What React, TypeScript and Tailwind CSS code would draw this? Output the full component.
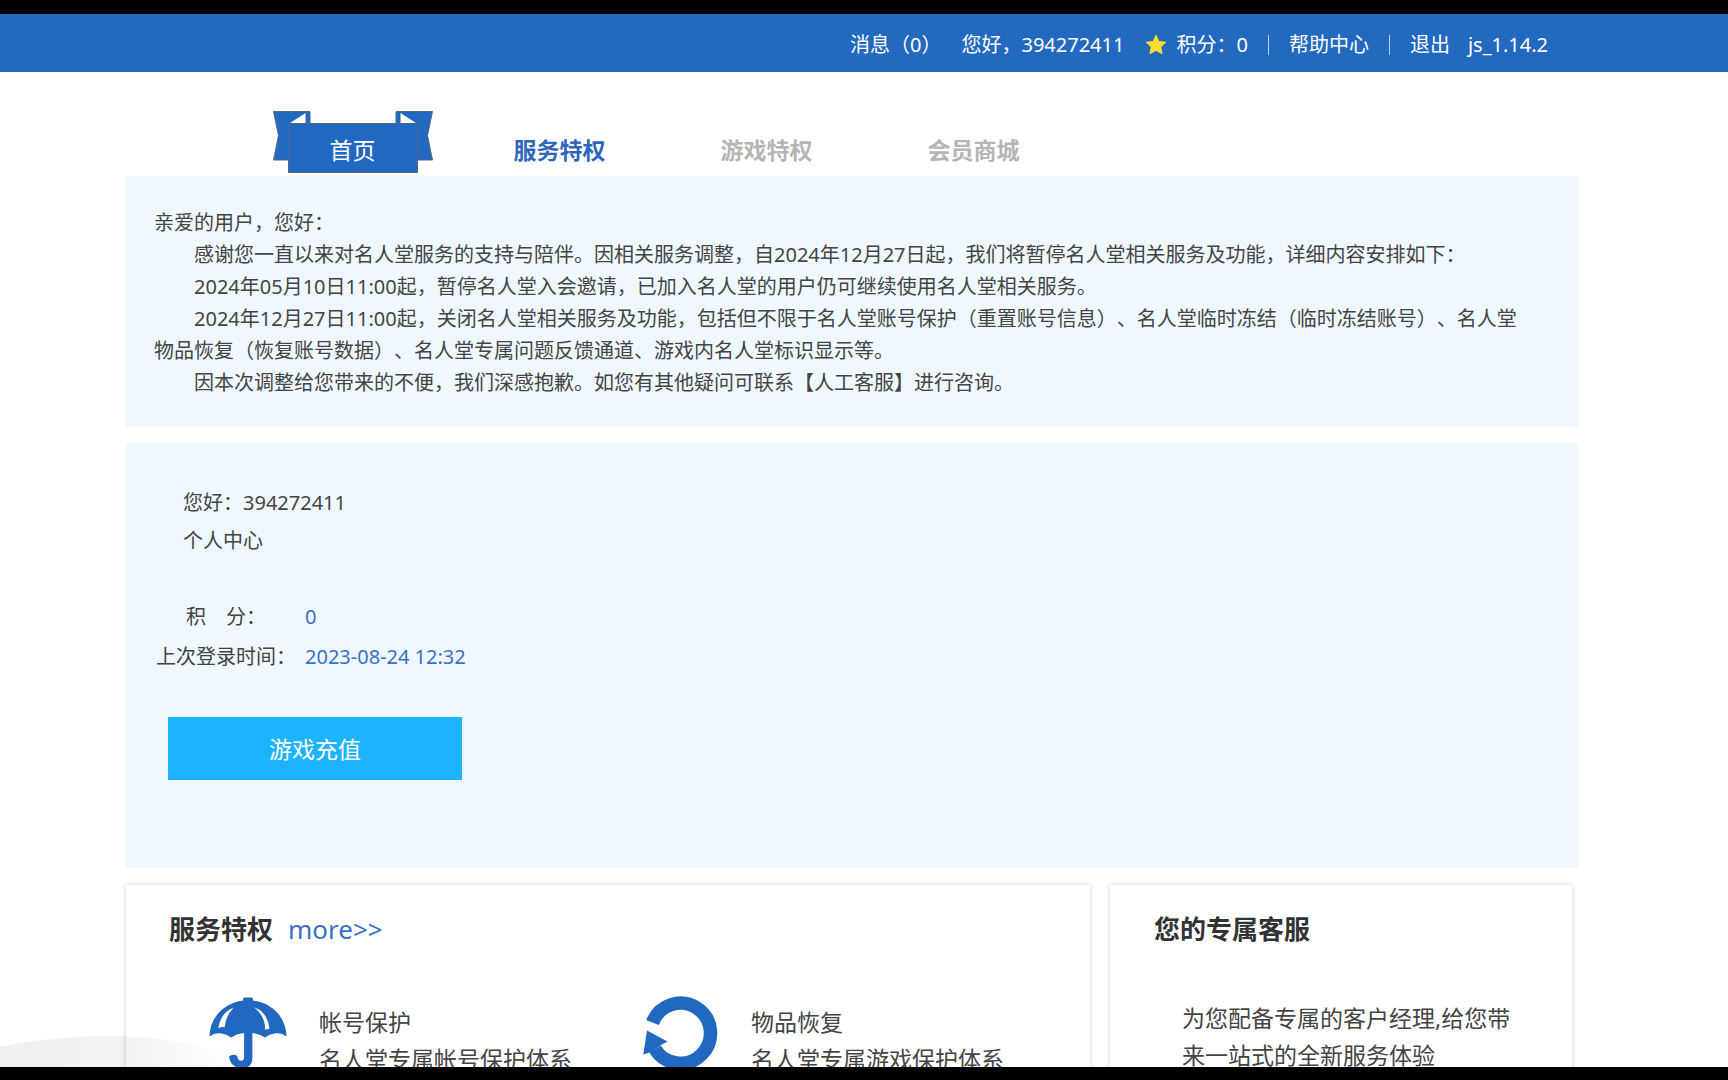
import React from 'react';

interface NavTab {
    label: string;
    className: string;
}

const otherTabs: NavTab[] = [
    { label: '服务特权', className: 'text-[#2f66bd]' },
    { label: '游戏特权', className: 'text-[#b5b5b5]' },
    { label: '会员商城', className: 'text-[#b5b5b5]' },
];

const StarIcon: React.FC = () => (
    <svg viewBox="0 0 24 24" className="w-6 h-6" fill="#fbdd2c">
        <path d="M12 2.200l2.900 6.300 6.900.8-5.100 4.700 1.400 6.800L12 17.400l-6.100 3.400 1.400-6.800-5.100-4.700 6.900-.8z" stroke="#fbdd2c" strokeLinejoin="round" />
    </svg>
);

const Ribbon: React.FC = () => (
    <svg viewBox="0 0 160 62" className="absolute left-1/2 top-0 -translate-x-1/2 w-[160px] h-[62px]">
        <g fill="#2268c0" stroke="#55677f" strokeWidth="1">
            <path d="M.5 .5H37V12L15.5 49H.5L5.5 24.5z" />
            <path d="M159.5 .5H123V12L144.5 49H159.5L154.5 24.5z" />
            <path d="M15.500 12.500H144.500V61.500H15.500z" />
        </g>
        <path d="M17 12L32.500 2V12z" fill="#fff" />
        <path d="M143 12L127.500 2V12z" fill="#fff" />
    </svg>
);

const UmbrellaIcon: React.FC = () => (
    <svg viewBox="0 0 80 78" className="w-[78px] h-[78px] shrink-0">
        <path
            d="M35 3.500V1.500Q35 .5 36.500 .5H43.500Q45 .5 45 1.500V3.500C64 6 79 20 79.500 40.500Q74 36 67 37.500Q61 38.500 57.500 41.500Q51 37.500 44.500 37V62Q44.500 73 33.500 73Q22 72.500 20.500 61Q25 58 29 60.500Q29.500 65.500 33 65.500Q36 65.500 36 61V37Q29 37.500 22.500 41.500Q19 38.500 13 37.500Q6 36 .5 40.500C1 20 16 6 35 3.500z"
            fill="#2268c0"
        />
        <path d="M25 11Q12 16 9.500 32Q13 30.500 16 31Q17 20 25 11z" fill="#fff" />
        <path d="M46 10.500Q60 15 62 32.500Q60 33 57.500 33.500Q58 20 46 10.500z" fill="#fff" />
    </svg>
);

const RestoreIcon: React.FC = () => (
    <svg viewBox="0 0 76 78" className="w-[76px] h-[78px] shrink-0">
        <path d="M9.500 26.500A30 30 0 1 1 12 53" fill="none" stroke="#2268c0" strokeWidth="13.5" />
        <path d="M4 34.500L24.500 45.500L18 49L8 56L.3 58.500z" fill="#2268c0" />
    </svg>
);

const Header: React.FC = () => (
    <header className="h-[58px] shrink-0 bg-[#2369bf] text-white flex items-center justify-end gap-5 pt-1 pr-[180px] whitespace-nowrap">
        <a href="#messages">消息（0）</a>
        <span>您好，394272411</span>
        <span className="flex items-center gap-2">
            <StarIcon />
            积分：0
        </span>
        <span className="w-px h-5 bg-[#b9d2f2]" />
        <a href="#help">帮助中心</a>
        <span className="w-px h-5 bg-[#b9d2f2]" />
        <span className="flex gap-[18px]">
            <a href="#logout">退出</a>
            <span>js_1.14.2</span>
        </span>
    </header>
);

const Privilege: React.FC<{ icon: React.ReactNode; title: string; text: string }> = ({ icon, title, text }) => (
    <div className="flex w-[434px] gap-8 whitespace-nowrap">
        {icon}
        <div className="pt-2 text-[23px] leading-[37px]">
            <h3>{title}</h3>
            <p>{text}</p>
        </div>
    </div>
);

const App: React.FC = () => {
    return (
        <div className="relative h-screen flex flex-col overflow-hidden bg-white text-[#444] text-[20px] leading-8 font-['Noto_Sans','Noto_Sans_CJK_SC',sans-serif] [text-spacing-trim:space-all]">
            <div className="h-[14px] shrink-0 bg-black" />
            <Header />

            <main className="flex-1 min-h-0 overflow-hidden pl-[126px] pr-[150px]">
                <nav className="flex h-[104px] pt-[39px] pl-[123px] text-[23px]">
                    <a href="#home" className="relative w-[207px] h-[62px] pt-4 flex items-center justify-center text-white">
                        <Ribbon />
                        <span className="relative">首页</span>
                    </a>
                    {otherTabs.map(tab => (
                        <a
                            key={tab.label}
                            href="#tab"
                            className={`w-[207px] h-[62px] pt-4 flex items-center justify-center font-bold ${tab.className}`}
                        >
                            {tab.label}
                        </a>
                    ))}
                </nav>

                <section className="bg-[#f0f8ff] h-[251px] pt-[31px] pl-7 pr-14">
                    <p>亲爱的用户，您好：</p>
                    <p className="indent-10">感谢您一直以来对名人堂服务的支持与陪伴。因相关服务调整，自2024年12月27日起，我们将暂停名人堂相关服务及功能，详细内容安排如下：</p>
                    <p className="indent-10">2024年05月10日11:00起，暂停名人堂入会邀请，已加入名人堂的用户仍可继续使用名人堂相关服务。</p>
                    <p className="indent-10">2024年12月27日11:00起，关闭名人堂相关服务及功能，包括但不限于名人堂账号保护（重置账号信息）、名人堂临时冻结（临时冻结账号）、名人堂物品恢复（恢复账号数据）、名人堂专属问题反馈通道、游戏内名人堂标识显示等。</p>
                    <p className="indent-10">因本次调整给您带来的不便，我们深感抱歉。如您有其他疑问可联系【人工客服】进行咨询。</p>
                </section>

                <section className="mt-4 bg-[#f0f8ff] h-[425px] pt-[41px]">
                    <div className="pl-[57px] leading-[38px]">
                        <p>您好：394272411</p>
                        <p>个人中心</p>
                    </div>
                    <dl className="mt-[37px] pl-[30px] grid grid-cols-[140px_1fr] gap-x-[9px] leading-10 whitespace-nowrap">
                        <dt className="text-center">积&emsp;分：</dt>
                        <dd className="text-[#3b70c4]">0</dd>
                        <dt className="text-center">上次登录时间：</dt>
                        <dd className="text-[#3b70c4]">2023-08-24 12:32</dd>
                    </dl>
                    <button type="button" className="mt-10 ml-[42px] w-[294px] h-[63px] bg-[#1eb3ff] text-white text-[23px]">
                        游戏充值
                    </button>
                </section>

                <div className="mt-[17px] mr-[6px] flex gap-5">
                    <section className="flex-1 h-[300px] bg-white shadow-[0_0_5px_rgba(0,0,0,0.2)] pt-[25px] pl-[43px]">
                        <h2 className="flex items-center gap-[15px] text-[26px] leading-[38px] font-bold text-[#333]">
                            服务特权
                            <a href="#more" className="font-normal text-[#3b70c4]">more&gt;&gt;</a>
                        </h2>
                        <div className="flex mt-12 pl-10">
                            <Privilege icon={<UmbrellaIcon />} title="帐号保护" text="名人堂专属帐号保护体系" />
                            <Privilege icon={<RestoreIcon />} title="物品恢复" text="名人堂专属游戏保护体系" />
                        </div>
                    </section>
                    <aside className="w-[462px] h-[300px] bg-white shadow-[0_0_5px_rgba(0,0,0,0.2)] pt-[25px] px-11">
                        <h2 className="text-[26px] leading-[38px] font-bold text-[#333]">您的专属客服</h2>
                        <p className="mt-[52px] pl-7 text-[23px] leading-[37px]">为您配备专属的客户经理,给您带来一站式的全新服务体验</p>
                    </aside>
                </div>
            </main>

            <div className="relative h-[13px] shrink-0 bg-black">
                {/* soft grey hill rising from the bottom left corner */}
                <svg viewBox="0 0 240 32" className="absolute left-0 bottom-full w-60 h-8 pointer-events-none">
                    <defs>
                        <linearGradient id="hill" x1="0" x2="1" y1="0" y2="0">
                            <stop offset="0" stopColor="#000" stopOpacity="0.06" />
                            <stop offset="0.5" stopColor="#000" stopOpacity="0.05" />
                            <stop offset="1" stopColor="#000" stopOpacity="0" />
                        </linearGradient>
                    </defs>
                    <path d="M0 12Q50 1 110 1Q180 2 225 19Q236 25 240 32H0z" fill="url(#hill)" />
                </svg>
            </div>
        </div>
    );
};

export default App;
